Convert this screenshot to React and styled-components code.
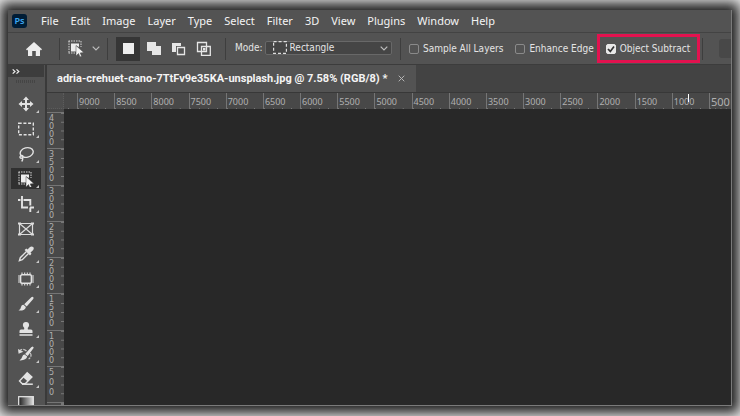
import React, { useState } from 'react';
import styled, { createGlobalStyle, css } from 'styled-components';

const GlobalStyle = createGlobalStyle`
  * {
    box-sizing: border-box;
  }
  body {
    margin: 0;
    background: #ececec;
    color: #e4e4e4;
    font-family: 'Noto Sans', 'Open Sans', sans-serif;
  }
  button, input, select {
    font: inherit;
    color: inherit;
    margin: 0;
  }
`;

const menuItems = ['File', 'Edit', 'Image', 'Layer', 'Type', 'Select', 'Filter', '3D', 'View', 'Plugins', 'Window', 'Help'];

const topLabels = Array.from({ length: 17 }, (_, i) => String(9000 - i * 500));
const sideLabels = Array.from({ length: 8 }, (_, i) => String(4000 - i * 500));

const ObjectSelectIcon = () => (
  <svg width="16" height="17" viewBox="0 0 16 17">
    <path d="M.5 1H13M.5 13H8M1 1V13M13 1V7" fill="none" stroke="#d8d8d8" strokeDasharray="1.5 1" />
    <path d="M3 3.5H11V7L8 5.5V11.5H3Z" fill="#eee" />
    <path d="M8 5.5V16L10.5 13.5L12 17L13.6 16.2L12.2 12.9L15.8 12.6Z" fill="#f4f4f4" stroke="#444" strokeWidth=".5" />
  </svg>
);

const Chevron = () => (
  <svg width="8" height="5" viewBox="0 0 8 5">
    <path d="M.7 .7L4 4L7.3 .7" fill="none" stroke="#bdbdbd" strokeWidth="1.2" />
  </svg>
);

const modes = [
  {
    name: 'New selection',
    icon: <path d="M2 2H13V13H2Z" fill="#eee" />,
  },
  {
    name: 'Add to selection',
    icon: <path d="M1 1H10V5H15V14H6V10H1Z" fill="#e6e6e6" />,
  },
  {
    name: 'Subtract from selection',
    icon: (
      <>
        <path d="M1 2H10V5H5V11H1Z" fill="#e6e6e6" />
        <path d="M6.5 6.5H13.5V13.5H6.5Z" fill="none" stroke="#e6e6e6" strokeWidth="1.3" />
      </>
    ),
  },
  {
    name: 'Intersect with selection',
    icon: (
      <>
        <path d="M1.5 1.5H10.5V10.5H1.5ZM5.5 5.5H14.3V14.3H5.5Z" fill="none" stroke="#e6e6e6" strokeWidth="1.3" />
        <path d="M7 7H9.5V9.5H7Z" fill="#e6e6e6" />
      </>
    ),
  },
];

const tools = [
  {
    name: 'Move',
    icon: <path d="M8 .5L11 4H9V7H12V5L15.5 8L12 11V9H9V12H11L8 15.5L5 12H7V9H4V11L.5 8L4 5V7H7V4H5Z" fill="#e2e2e2" />,
  },
  {
    name: 'Rectangular marquee',
    icon: <rect x=".7" y="2.2" width="14.6" height="11.6" fill="none" stroke="#e2e2e2" strokeWidth="1.4" strokeDasharray="3 1.7" />,
  },
  {
    name: 'Lasso',
    icon: (
      <>
        <ellipse cx="8.7" cy="6.5" rx="6.6" ry="4.7" transform="rotate(-14 8.7 6.5)" fill="none" stroke="#e2e2e2" strokeWidth="1.4" />
        <path d="M3.7 9.4C1.7 9.7 1.3 12 3.2 12.2C5.7 12.2 5.3 9.2 3.7 9.4M4.7 12Q5 14 3.7 15.4" fill="none" stroke="#e2e2e2" strokeWidth="1.4" />
      </>
    ),
  },
  { name: 'Object selection', icon: <ObjectSelectIcon /> },
  {
    name: 'Crop',
    icon: (
      <g fill="none" stroke="#e2e2e2" strokeWidth="1.9">
        <path d="M4 0V11.5H10M12.3 11.5V16M12 11.5H16M0 4H2.5M5.5 4H12.3V9.5" />
      </g>
    ),
  },
  {
    name: 'Frame',
    icon: (
      <g fill="none" stroke="#dcdcdc" strokeWidth="1.2">
        <path d="M1.5 2.5H14.5V13.5H1.5ZM1.5 2.5L14.5 13.5M14.5 2.5L1.5 13.5" />
        <path d="M0 2.5H3M13 2.5H16M0 13.5H3M13 13.5H16" strokeWidth="2" />
      </g>
    ),
  },
  {
    name: 'Eyedropper',
    icon: (
      <>
        <path d="M8.5 5.5L2.3 11.7L1.4 14.6L4.3 13.7L10.5 7.5" fill="none" stroke="#e2e2e2" strokeWidth="1.4" />
        <path d="M6.6 4L8.3 2.6L9.5 3.6L12 1Q13.7 -.2 15.2 1.1Q16.4 2.6 15 4.2L12.5 6.5L13.5 7.7L12 9.4Z" fill="#e2e2e2" />
      </>
    ),
  },
  {
    name: 'Patch',
    icon: (
      <>
        <path d="M4 1.5V14.5M6.7 1.5V14.5M9.3 1.5V14.5M12 1.5V14.5M0 5H16M0 7H16M0 9H16M0 11H16" stroke="#e2e2e2" strokeWidth="1.1" />
        <rect x="2.6" y="3.8" width="10.8" height="8.4" rx="1.5" fill="#535353" stroke="#e2e2e2" strokeWidth="1.5" />
      </>
    ),
  },
  {
    name: 'Brush',
    icon: (
      <>
        <path d="M15 1Q16.2 2 15 3.3L8.7 10.4L6.2 8.2L13.3 1.2Q14.4 .3 15 1Z" fill="#e2e2e2" />
        <path d="M5.5 8.8L7.9 11Q7.4 14.9 .5 14.6Q2.8 13 3 11Q3.5 8.7 5.5 8.8Z" fill="#e2e2e2" />
      </>
    ),
  },
  {
    name: 'Clone stamp',
    icon: (
      <>
        <circle cx="8" cy="4" r="3.1" fill="#e2e2e2" />
        <path d="M6.5 5H9.5L9.9 8.5H13Q14.5 8.6 14.5 10V12H1.5V10Q1.5 8.6 3 8.5H6.1ZM1.5 13.3H14.5V14.8H1.5Z" fill="#e2e2e2" />
      </>
    ),
  },
  {
    name: 'History brush',
    icon: (
      <>
        <path d="M14.8 .6L15.8 1.8L9.7 9.9L7.1 7.9L13.2 1.3ZM6.6 8.6L9.2 10.6Q8.2 14.7 1.5 14.4Q4 12.5 4.2 10.7Q4.8 8.6 6.6 8.6Z" fill="#e2e2e2" />
        <path d="M1.2 5.8Q2.5 3 5 3.4Q7.3 3.6 8.5 5.2M12.3 7Q14.5 10.3 10.6 13" fill="none" stroke="#c8c8c8" strokeWidth="1.3" strokeDasharray="4 1" />
        <path d="M0 3L.6 7.8L5.4 5.8Z" fill="#dcdcdc" />
      </>
    ),
  },
  {
    name: 'Eraser',
    icon: (
      <>
        <path d="M9.2 1.8L13.9 6L7.5 12.6H4L1.5 10Z" fill="none" stroke="#e2e2e2" strokeWidth="1.4" />
        <path d="M9.2 1.8L13.9 6L9.8 10.4L5 6.2Z" fill="#e2e2e2" />
        <path d="M4 13.2H14.8" stroke="#e2e2e2" strokeWidth="1.5" />
      </>
    ),
  },
  {
    name: 'Gradient',
    icon: (
      <>
        <defs>
          <linearGradient id="toolGradient">
            <stop offset="0" stopColor="#1c1c1c" />
            <stop offset="1" stopColor="#ddd" />
          </linearGradient>
        </defs>
        <rect x=".7" y=".7" width="14.6" height="14.6" fill="url(#toolGradient)" stroke="#e2e2e2" strokeWidth="1.3" />
      </>
    ),
  },
];

const Check = ({ id, label, defaultChecked }) => {
  const [checked, setChecked] = useState(Boolean(defaultChecked));
  return (
    <CheckLabel htmlFor={id}>
      <CheckBoxWrap>
        <CheckBox id={id} type="checkbox" checked={checked} onChange={() => setChecked(!checked)} />
        {checked && (
          <svg width="10" height="10" viewBox="0 0 10 10">
            <path d="M2 5L4.3 7.4L8 2.4" fill="none" stroke="#333" strokeWidth="1.7" />
          </svg>
        )}
      </CheckBoxWrap>
      {label}
    </CheckLabel>
  );
};

const App = () => {
  const [mode, setMode] = useState(0);
  const [tool, setTool] = useState(3);

  return (
    <Backdrop>
      <GlobalStyle />
      <AppWindow>
        <MenuBar>
          <Logo>Ps</Logo>
          {menuItems.map(item => (
            <MenuButton key={item}>{item}</MenuButton>
          ))}
        </MenuBar>

        <OptionsBar>
          <HomeButton aria-label="Home">
            <svg width="16" height="14" viewBox="0 0 16 14">
              <path d="M8 0L16 7.2L14.9 8.4L14 7.6V14H9.8V9H6.2V14H2V7.6L1.1 8.4L0 7.2Z" fill="#ececec" />
            </svg>
          </HomeButton>
          <Divider />
          <PresetButton aria-label="Tool preset">
            <ObjectSelectIcon />
            <Chevron />
          </PresetButton>
          <Divider />
          <ModeGroup>
            {modes.map((item, index) => (
              <ModeButton key={item.name} aria-label={item.name} $active={index === mode} onClick={() => setMode(index)}>
                <svg width="15" height="15" viewBox="0 0 15 15">{item.icon}</svg>
              </ModeButton>
            ))}
          </ModeGroup>
          <Divider />
          <ModeField>
            <label htmlFor="shape">Mode:</label>
            <SelectWrap>
              <ShapeIcon width="14" height="13" viewBox="0 0 14 13">
                <rect x=".6" y=".6" width="12.8" height="11.8" fill="none" stroke="#ddd" strokeWidth="1.2" strokeDasharray="3 2" />
              </ShapeIcon>
              <ShapeSelect id="shape" defaultValue="Rectangle">
                <option>Rectangle</option>
              </ShapeSelect>
              <SelectArrow><Chevron /></SelectArrow>
            </SelectWrap>
          </ModeField>
          <Divider />
          <CheckGroup>
            <Check id="sample" label="Sample All Layers" />
            <Check id="enhance" label="Enhance Edge" />
          </CheckGroup>
          <Highlight>
            <Check id="subtract" label="Object Subtract" defaultChecked />
          </Highlight>
          <Divider />
          <CutButton aria-label="Select subject" />
        </OptionsBar>

        <Workspace>
          <Toolbar>
            <ToolbarHeader aria-label="Expand tools">
              <svg width="8" height="5" viewBox="0 0 8 5">
                <path d="M.7 .4L3 2.5L.7 4.6M4.5 .4L6.8 2.5L4.5 4.6" fill="none" stroke="#eee" strokeWidth="1.2" />
              </svg>
            </ToolbarHeader>
            <Grip />
            {tools.map((item, index) => (
              <ToolButton key={item.name} aria-label={item.name} $active={index === tool} onClick={() => setTool(index)}>
                <svg width="16" height="16" viewBox="0 0 16 16">{item.icon}</svg>
                {item.name !== 'Frame' && <Corner />}
              </ToolButton>
            ))}
          </Toolbar>

          <Document>
            <TabBar>
              <Tab>
                adria-crehuet-cano-7TtFv9e35KA-unsplash.jpg @ 7.58% (RGB/8) *
                <CloseButton aria-label="Close tab">
                  <svg width="7" height="7" viewBox="0 0 7 7">
                    <path d="M.7 .7L6.3 6.3M6.3 .7L.7 6.3" stroke="#b5b5b5" />
                  </svg>
                </CloseButton>
              </Tab>
            </TabBar>
            <CanvasGrid>
              <RulerCorner />
              <TopRuler>
                <TopSpacer />
                {topLabels.map(label => <TopMark key={label}>{label}</TopMark>)}
                <TopMark $large>500</TopMark>
                <Pointer />
              </TopRuler>
              <SideRuler>
                <span />
                {sideLabels.map(label => (
                  <SideMark key={label} $spread={label.length === 3}>
                    {label.split('').map((digit, i) => <span key={i}>{digit}</span>)}
                  </SideMark>
                ))}
                <SideMark />
              </SideRuler>
              <Canvas />
            </CanvasGrid>
          </Document>
        </Workspace>
      </AppWindow>
    </Backdrop>
  );
};

export default App;


const bareButton = css`
  border: 0;
  padding: 0;
  background: none;
  display: flex;
  align-items: center;
  justify-content: center;
`;

const Backdrop = styled.div`
  height: 100vh;
  padding: 10px 8px;
  display: flex;
  overflow: hidden;
`;

const AppWindow = styled.div`
  flex: 1;
  min-width: 0;
  display: flex;
  flex-direction: column;
  background: #535353;
  border-right: 1px solid #7a7a7a;
  border-bottom: 1px solid #7a7a7a;
  box-shadow: 0 0 12px 7px #1c1c1c;
`;

const MenuBar = styled.nav`
  height: 23px;
  flex: none;
  display: flex;
  align-items: center;
  gap: 12px;
  padding-left: 4px;
  border-bottom: 1px solid #434343;
`;

const Logo = styled.div`
  width: 15px;
  height: 14px;
  margin-right: 2px;
  border-radius: 3px;
  background: #001d36;
  color: #3fa9f5;
  font-size: 9px;
  font-weight: 600;
  line-height: 14px;
  text-align: center;
`;

const MenuButton = styled.button`
  ${bareButton}
  font-size: 11px;
  line-height: 20px;
  color: #f4f4f4;
`;

const OptionsBar = styled.div`
  height: 32px;
  flex: none;
  display: flex;
  align-items: center;
  overflow: hidden;
  white-space: nowrap;
  font-family: 'DejaVu Sans Condensed', 'DejaVu Sans', sans-serif;
  font-size: 10px;
  border-bottom: 1px solid #3c3c3c;
`;

const Divider = styled.span`
  width: 1px;
  height: 22px;
  flex: none;
  background: #3e3e3e;
`;

const HomeButton = styled.button`
  ${bareButton}
  width: 51px;
  flex: none;
`;

const PresetButton = styled.button`
  ${bareButton}
  width: 47px;
  flex: none;
  gap: 8px;
`;

const ModeGroup = styled.div`
  width: 117px;
  flex: none;
  display: flex;
  gap: 1px;
  padding-left: 8px;
`;

const ModeButton = styled.button`
  ${bareButton}
  width: 24px;
  height: 24px;
  background: ${({ $active }) => ($active ? '#363636' : 'none')};
`;

const ModeField = styled.div`
  width: 174px;
  flex: none;
  display: flex;
  align-items: center;
  gap: 2px;
  padding: 0 8px 2px 9px;
`;

const SelectWrap = styled.div`
  position: relative;
  flex: 1;
  display: flex;
`;

const ShapeSelect = styled.select`
  appearance: none;
  width: 100%;
  height: 14px;
  padding: 0 16px 0 24px;
  border: 1px solid #686868;
  border-radius: 2px;
  background: #454545;
  line-height: 12px;
`;

const ShapeIcon = styled.svg`
  position: absolute;
  left: 8px;
  top: 0;
`;

const SelectArrow = styled.span`
  position: absolute;
  right: 4px;
  top: 5px;
  display: flex;
  pointer-events: none;
`;

const CheckGroup = styled.div`
  flex: none;
  display: flex;
  gap: 12px;
  padding: 0 3px 0 8px;
`;

const CheckLabel = styled.label`
  display: flex;
  align-items: center;
  gap: 4px;
`;

const CheckBoxWrap = styled.span`
  position: relative;
  display: flex;
  svg {
    position: absolute;
    inset: 0;
    pointer-events: none;
  }
`;

const CheckBox = styled.input`
  appearance: none;
  width: 10px;
  height: 10px;
  border: 1px solid #8a8a8a;
  border-radius: 2px;
  &:checked {
    background: #e8e8e8;
    border-color: #e8e8e8;
  }
`;

const Highlight = styled.div`
  height: 29px;
  flex: none;
  display: flex;
  align-items: center;
  padding: 0 7px 0 6px;
  margin-right: 2px;
  border: 3px solid #e3124f;
`;

const CutButton = styled.button`
  flex: 1;
  min-width: 0;
  height: 19px;
  padding: 0;
  margin-left: 16px;
  border: 0;
  border-radius: 3px 0 0 3px;
  background: #484848;
`;

const Workspace = styled.div`
  flex: 1;
  min-height: 0;
  display: flex;
  overflow: hidden;
`;

const Toolbar = styled.div`
  width: 39px;
  flex: none;
  display: flex;
  flex-direction: column;
  align-items: center;
  overflow: hidden;
  padding-right: 1px;
  border-right: 2px solid #3a3a3a;
`;

const ToolbarHeader = styled.button`
  ${bareButton}
  align-self: stretch;
  justify-content: flex-start;
  height: 12px;
  flex: none;
  padding-left: 4px;
  background: #3d3d3d;
`;

const Grip = styled.span`
  width: 20px;
  height: 3px;
  flex: none;
  margin: 3px 0 8px;
  background: repeating-linear-gradient(90deg, #454545 0 1px, #535353 1px 2px);
`;

const ToolButton = styled.button`
  ${bareButton}
  position: relative;
  width: 30px;
  height: 21px;
  flex: none;
  margin: 2px 0;
  background: ${({ $active }) => ($active ? '#303030' : 'none')};
`;

const Corner = styled.span`
  position: absolute;
  right: 2px;
  bottom: 1px;
  border-left: 3px solid transparent;
  border-bottom: 3px solid #c8c8c8;
`;

const Document = styled.main`
  flex: 1;
  min-width: 0;
  display: flex;
  flex-direction: column;
`;

const TabBar = styled.div`
  height: 28px;
  flex: none;
  display: flex;
  background: #434343;
  border-bottom: 1px solid #383838;
`;

const Tab = styled.div`
  display: flex;
  align-items: center;
  gap: 11px;
  padding: 0 11px 0 10px;
  background: #535353;
  color: #f4f4f4;
  font-family: Roboto, 'Noto Sans', sans-serif;
  font-size: 11px;
  font-weight: 700;
  white-space: nowrap;
`;

const CloseButton = styled.button`
  ${bareButton}
`;

const CanvasGrid = styled.div`
  flex: 1;
  min-height: 0;
  display: grid;
  grid-template: 16px minmax(0, 1fr) / 17px minmax(0, 1fr);
  color: #b0b0b0;
`;

const RulerCorner = styled.div`
  background: #4d4d4d;
  border-right: 1px dotted #5c5c5c;
  border-bottom: 1px dotted #5c5c5c;
`;

const TopRuler = styled.div`
  position: relative;
  display: grid;
  grid-template-columns: 13px repeat(17, minmax(0, 1fr)) 22px;
  overflow: hidden;
  background: #484848;
`;

const topTicks = css`
  background: linear-gradient(90deg, #777 1px, transparent 1px) 0 100% / 25% 3px repeat-x;
`;

const TopSpacer = styled.span`
  background: linear-gradient(#777, #777) 4px 100% / 1px 3px no-repeat;
`;

const TopMark = styled.span`
  ${topTicks}
  padding-left: 1px;
  border-left: 1px solid #757575;
  font-size: ${({ $large }) => ($large ? '11px' : '9px')};
  line-height: 18px;
`;

const Pointer = styled.span`
  position: absolute;
  right: 42px;
  top: 1px;
  width: 1px;
  height: 8px;
  background: #fff;
`;

const SideRuler = styled.div`
  display: grid;
  grid-template-rows: 3px repeat(8, minmax(0, 1fr)) 3px;
  overflow: hidden;
  background: #484848;
`;

const SideMark = styled.div`
  display: flex;
  flex-direction: column;
  gap: ${({ $spread }) => ($spread ? '2px' : '0')};
  padding: 2px 0 0 2px;
  overflow: hidden;
  border-top: 1px solid #757575;
  background: linear-gradient(#777 1px, transparent 1px) 100% 0 / 3px 25% repeat-y;
  font-family: 'DejaVu Sans', sans-serif;
  font-size: 8px;
  line-height: 8px;
`;

const Canvas = styled.div`
  background: #282828;
`;
